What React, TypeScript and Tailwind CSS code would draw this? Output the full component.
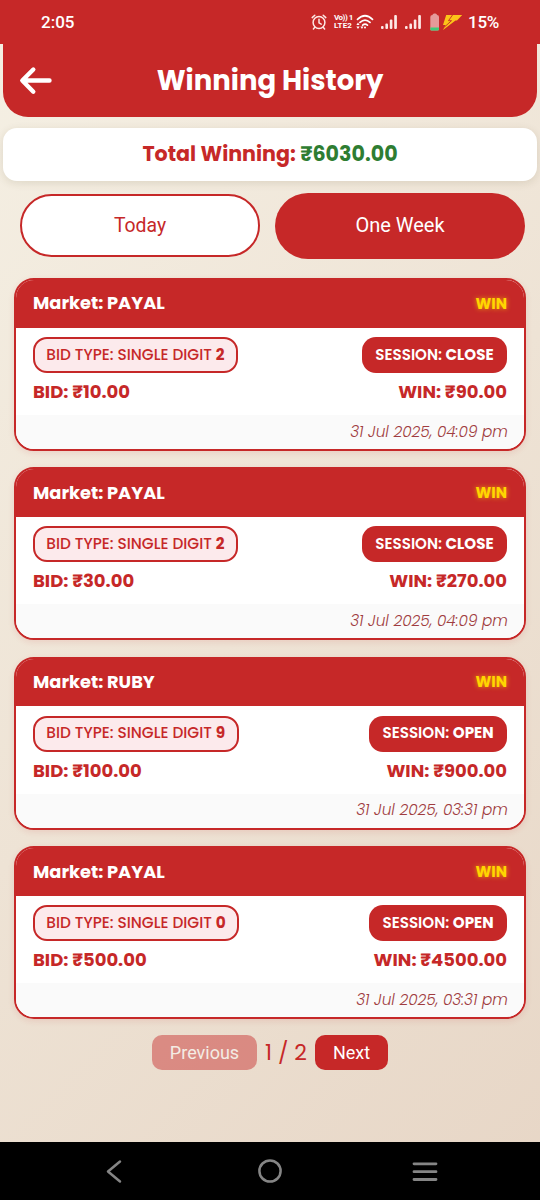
import React from "react";

type Win = { market: string; digit: number; session: string; bid: string; win: string; time: string };

const wins: Win[] = [
  { market: "PAYAL", digit: 2, session: "CLOSE", bid: "10.00", win: "90.00", time: "31 Jul 2025, 04:09 pm" },
  { market: "PAYAL", digit: 2, session: "CLOSE", bid: "30.00", win: "270.00", time: "31 Jul 2025, 04:09 pm" },
  { market: "RUBY", digit: 9, session: "OPEN", bid: "100.00", win: "900.00", time: "31 Jul 2025, 03:31 pm" },
  { market: "PAYAL", digit: 0, session: "OPEN", bid: "500.00", win: "4500.00", time: "31 Jul 2025, 03:31 pm" },
];

function Signal() {
  return (
    <svg width="17" height="15" viewBox="0 0 17 15" fill="#fde9e6">
      <rect x="0" y="11" width="2.6" height="3" rx="1" />
      <rect x="4.4" y="8.6" width="2.6" height="5.4" rx="1" />
      <rect x="8.8" y="4.6" width="2.6" height="9.4" rx="1" />
      <rect x="13.2" y="0" width="2.7" height="14" rx="1" />
    </svg>
  );
}

function StatusBar() {
  return (
    <div className="flex h-11 items-center bg-[#c62828] pl-[41px] pr-[41px] text-white">
      <span className="font-['Roboto',sans-serif] text-[17px] font-medium leading-5">2:05</span>
      <div className="ml-auto flex items-center">
        <svg width="16" height="16" viewBox="0 0 16 16" fill="none" stroke="#fde8e5" strokeWidth="1.5" strokeLinecap="round">
          <circle cx="8" cy="8.5" r="5.9" />
          <path d="M8 5.3v3.6l2.2 1.3M1.2 3.6 3.8 1.2M14.8 3.6l-2.6-2.4M3.8 13.3l-1.4 1.6M12.2 13.3l1.4 1.6" />
        </svg>
        <div className="ml-[7px] flex w-[20px] flex-col font-['Roboto',sans-serif] text-[8px] font-bold leading-[8px]">
          <span className="whitespace-nowrap tracking-[-0.5px]">Vo)) 1</span>
          <span className="whitespace-nowrap tracking-[0.1px]">LTE2</span>
        </div>
        <svg className="ml-[2px]" width="18" height="16" viewBox="0 0 18 16" fill="none" stroke="#fff" strokeWidth="1.7" strokeLinecap="round">
          <path d="M1.5 5.3Q9-1.8 16.5 5.3M4 8.4q5-4.5 10 0M6.7 11.2q2.3-2 4.7 0" />
          <circle cx="9" cy="13.6" r="1" fill="#fff" stroke="none" />
          <path d="M.4 11 2 8.6 3.6 11zM.4 12.6 2 15l1.6-2.4zM4.4 12.6 6 15l1.4-2.4z" fill="#fff" stroke="none" />
        </svg>
        <span className="ml-[7px]"><Signal /></span>
        <span className="ml-[7px]"><Signal /></span>
        <svg className="ml-[8px]" width="33" height="18" viewBox="0 0 33 18">
          <path d="M2.5 2Q2.5.5 4.3.5h1Q7 .5 7 2q2 .2 2 2v12q0 1.5-1.5 1.5h-6Q.3 17.5.3 16V4Q.3 2 2.5 2z" fill="#e59a9a" />
          <path d="M.3 14.6H9V16q0 1.5-1.5 1.5h-6Q.3 17.5.3 16z" fill="#3ecb78" />
          <path d="M16.2 2h16L27 7.5h-1.5L13 17l2.6-5H13z" fill="#fcc419" />
          <path d="M22.5 2 18.5 7.7h3L14.5 14" fill="none" stroke="#c62828" strokeWidth="0.9" />
        </svg>
        <span className="ml-[5px] font-['Roboto',sans-serif] text-[17px] font-medium leading-5 tracking-[-0.3px]">15%</span>
      </div>
    </div>
  );
}

function WinCard({ item }: { item: Win }) {
  return (
    <article className="h-[173px] overflow-hidden rounded-[20px] border-2 border-[#c62828] bg-white shadow-[0_2px_6px_rgba(198,40,40,0.12)]">
      <div className="flex h-[47.5px] items-center justify-between bg-[#c62828] px-[17px] text-white">
        <h2 className="text-[17.8px] font-bold">Market: {item.market}</h2>
        <span className="text-[15px] font-bold text-[#ffd600] [text-shadow:0_0_5px_rgba(255,214,0,0.7)]">WIN</span>
      </div>
      <div className="flex h-[87.5px] flex-col px-[17px] pt-[9.5px]">
        <div className="flex justify-between">
          <span className="flex h-9 items-center rounded-[14px] border-2 border-[#c62828] bg-[#fceaec] px-[11.3px] text-[15.3px] font-medium">
            <span className="whitespace-nowrap">BID TYPE: SINGLE DIGIT <span className="font-bold">{item.digit}</span></span>
          </span>
          <span className="flex h-9 items-center rounded-[14px] bg-[#c62828] px-[13.4px] text-[15.1px] font-semibold text-white">
            <span className="whitespace-nowrap">SESSION: <span className="font-bold">{item.session}</span></span>
          </span>
        </div>
        <div className="mt-[7px] flex justify-between text-[18px] font-bold leading-6">
          <span>BID: ₹{item.bid}</span>
          <span>WIN: ₹{item.win}</span>
        </div>
      </div>
      <div className="flex h-[34px] items-center justify-end bg-[#fafafa] pr-4 text-[15.3px] font-light italic text-[#a03c40]">
        {item.time}
      </div>
    </article>
  );
}

export default function App() {
  return (
    <div className="flex h-[1200px] w-[540px] flex-col overflow-hidden bg-[linear-gradient(135deg,#f5f0e4,#e7d6c6)] font-['Poppins','Inter',sans-serif] text-[#c62828]">
      <StatusBar />
      <header className="mx-[3px] grid h-[73px] grid-cols-[64px_1fr_64px] items-center rounded-b-[25px] bg-[#c62828] text-white">
        <button className="pl-[16px]" aria-label="Back">
          <svg width="34" height="30" viewBox="0 0 34 30" fill="none" stroke="currentColor" strokeWidth="4.4" strokeLinecap="round" strokeLinejoin="round">
            <path d="M14.3 3.5 3.3 14.5l11 11.2M4 14.5h26.5" />
          </svg>
        </button>
        <h1 className="text-center text-[27.5px] font-bold">Winning History</h1>
      </header>
      <div className="mx-[3px] mt-[11px] flex h-[53px] shrink-0 items-center justify-center rounded-[14px] bg-white text-[20.6px] font-bold shadow-[0_2px_8px_rgba(80,60,20,0.13)]">
        <span>Total Winning: <span className="text-[#2e7d32]">₹6030.00</span></span>
      </div>
      <div className="mt-3 flex h-[66px] shrink-0 items-start gap-[15px] pl-5 pr-[15px] font-['Roboto',sans-serif] text-[20px]">
        <button className="mt-px h-[63px] w-[240px] rounded-[32px] border-2 border-[#c62828] bg-white pt-px text-[19.4px]">Today</button>
        <button className="h-[66px] w-[250px] rounded-[33px] bg-[#c62828] pb-[2px] text-white">One Week</button>
      </div>
      <main className="mx-[14px] mt-[19px] flex flex-col gap-[16.4px]">
        {wins.map((item, i) => <WinCard key={i} item={item} />)}
      </main>
      <div className="mt-4 flex items-center justify-center font-['Roboto',sans-serif] text-[18px]">
        <button className="h-[35px] w-[105px] rounded-[10px] bg-[#c62828] text-white opacity-45">Previous</button>
        <span className="w-[58px] text-center font-['Poppins','Inter',sans-serif] text-[22px]">1 / 2</span>
        <button className="h-[35px] w-[73px] rounded-[10px] bg-[#c62828] text-white">Next</button>
      </div>
      <nav className="mt-auto flex h-[58px] items-center bg-black">
        <svg width="540" height="58" viewBox="0 0 540 58" fill="none" stroke="#858585" strokeWidth="2.5" strokeLinecap="round" strokeLinejoin="round">
          <path d="m120 19.5-12 10 12 10" />
          <circle cx="270" cy="29" r="10.6" />
          <path d="M414 21.8h22M414 29.7h22M414 37.5h22" strokeWidth="2.8" />
        </svg>
      </nav>
    </div>
  );
}
